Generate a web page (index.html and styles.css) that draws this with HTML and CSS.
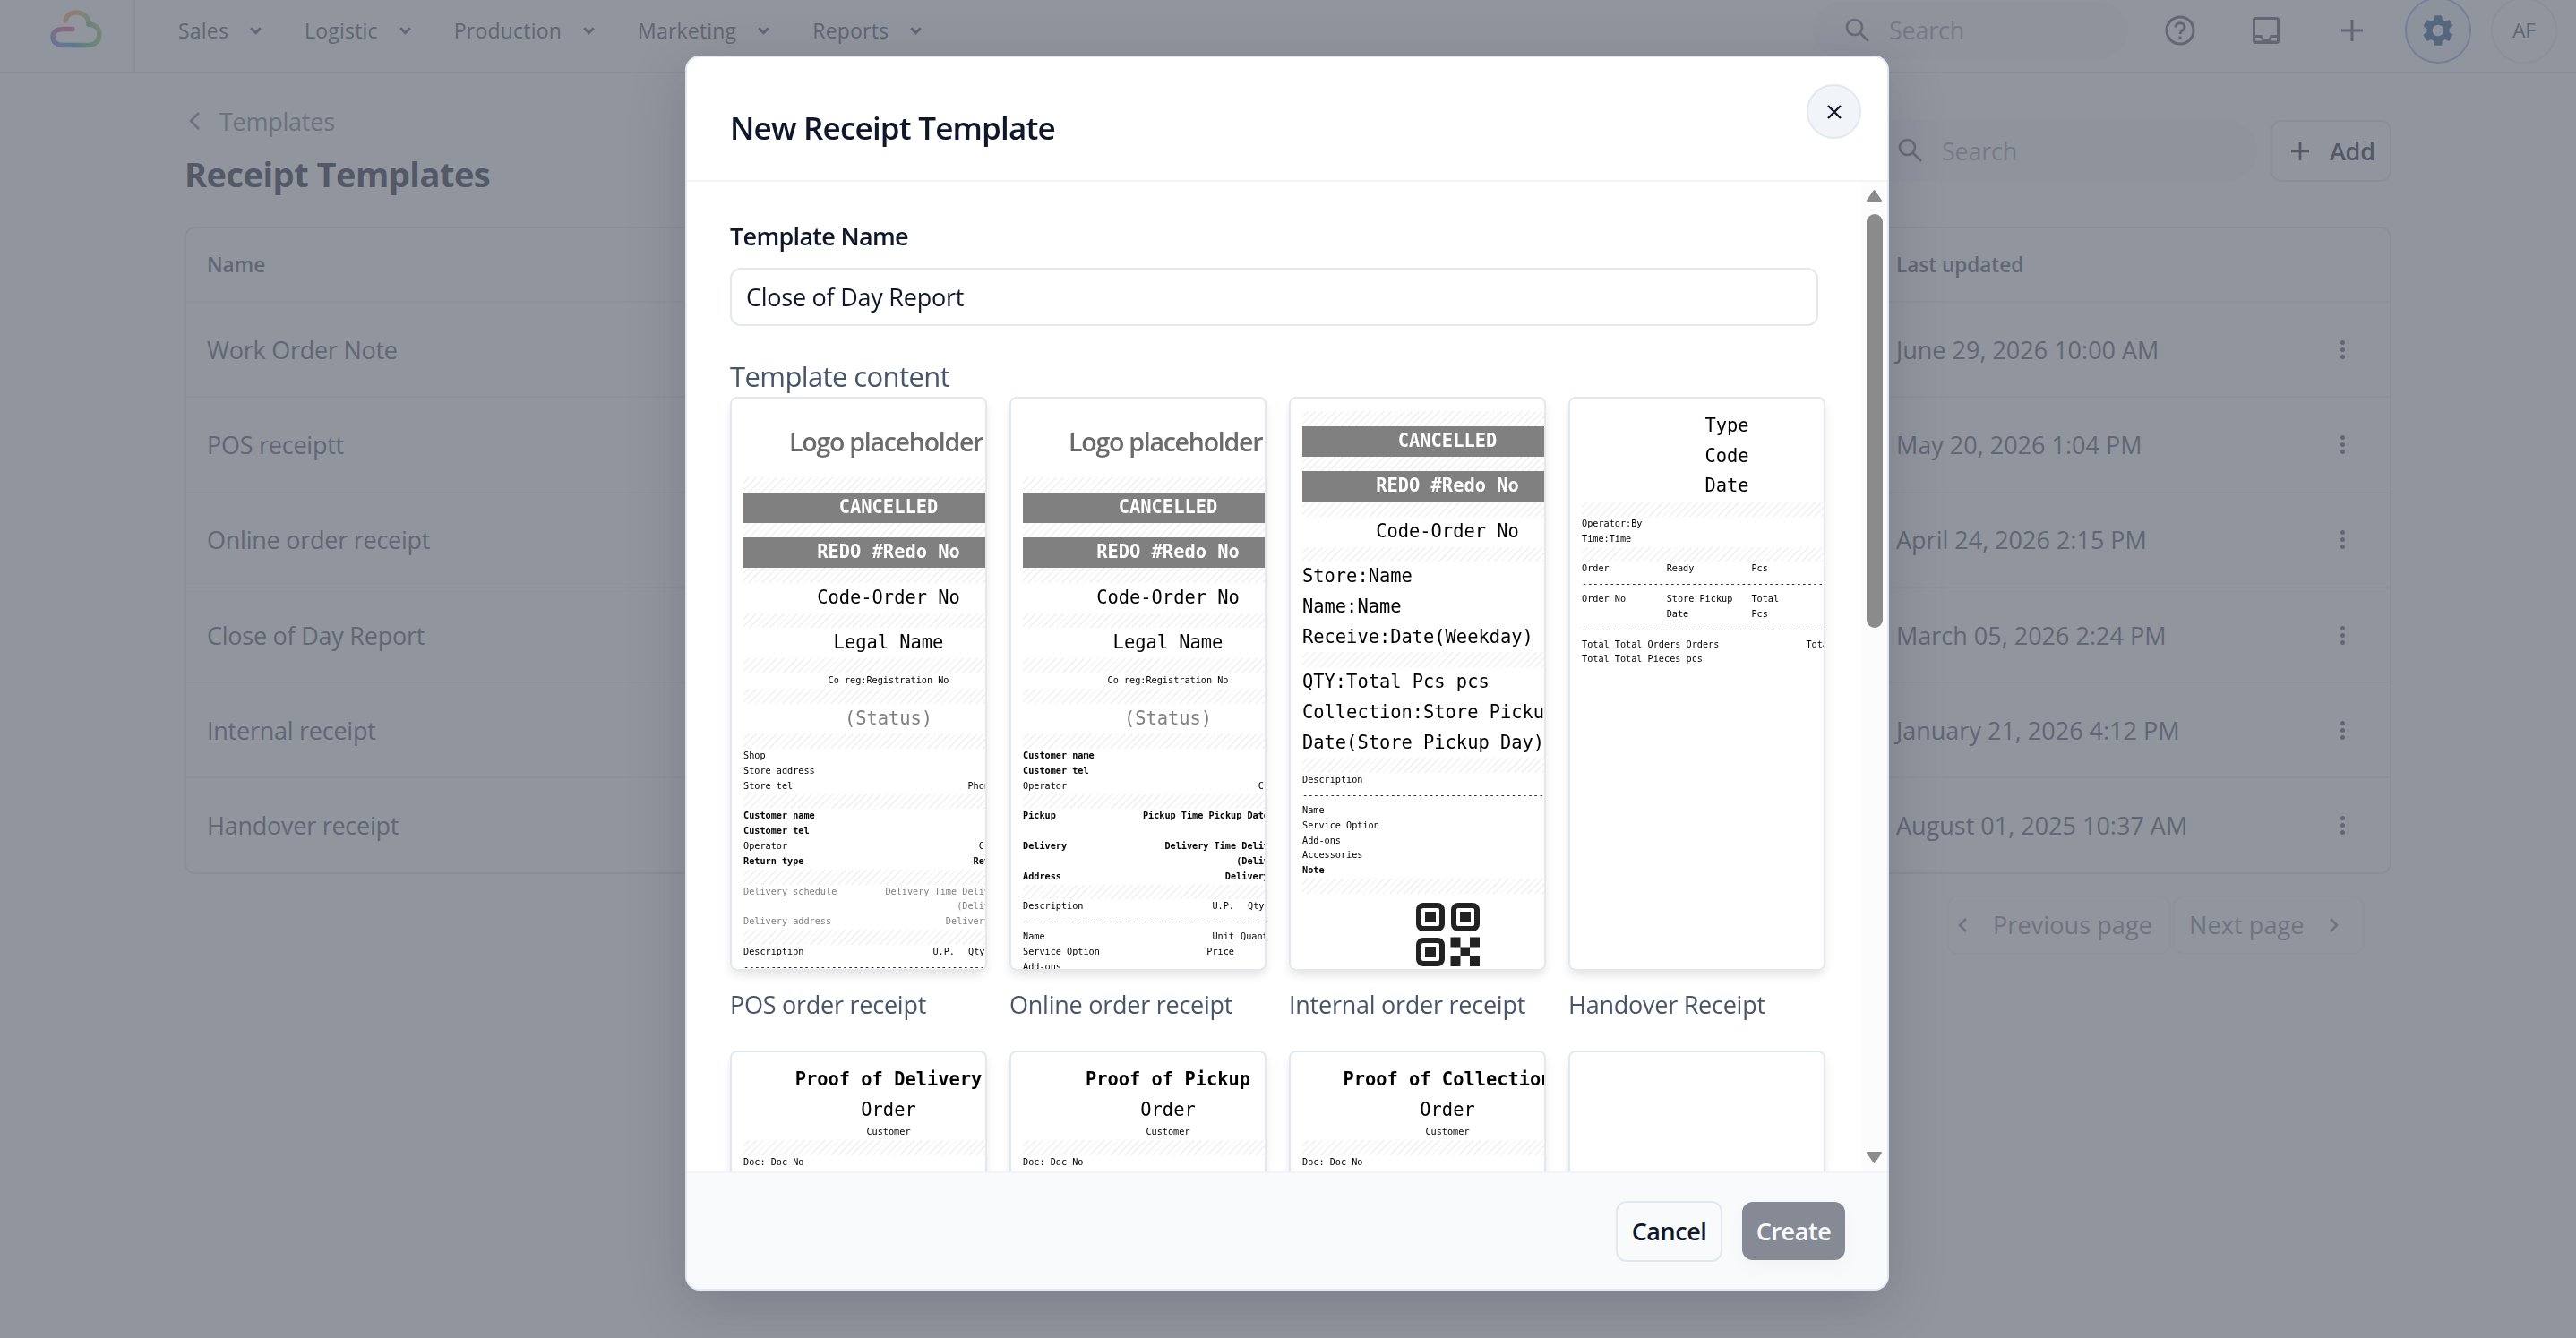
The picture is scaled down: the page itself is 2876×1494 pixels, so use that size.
FILE: index.html
```html
<!DOCTYPE html>
<html lang="en">
<head>
    <meta charset="utf-8" />
    <title>Receipt Templates</title>
    <link rel="stylesheet" href="styles.css">
</head>
<body>
    <header class="topbar">
        <div class="brand">
            <svg class="logo" viewBox="0 0 60 44" fill="none" stroke-width="5.5" stroke-linecap="round" stroke-linejoin="round">
                <defs>
                    <linearGradient id="g1" x1="0" y1="0" x2="1" y2="0.4">
                        <stop offset="0" stop-color="#ffb08c" /><stop offset="0.5" stop-color="#ecd08a" /><stop offset="1" stop-color="#b9d58c" />
                    </linearGradient>
                    <linearGradient id="g2" x1="0" y1="0" x2="1" y2="0">
                        <stop offset="0" stop-color="#8fa4ec" /><stop offset="0.4" stop-color="#6fb0d8" /><stop offset="0.7" stop-color="#7fcbb0" /><stop offset="1" stop-color="#b4d890" />
                    </linearGradient>
                    <linearGradient id="g3" x1="0" y1="1" x2="1" y2="0">
                        <stop offset="0" stop-color="#8fa4ec" /><stop offset="0.5" stop-color="#c893c8" /><stop offset="1" stop-color="#ee7f9c" />
                    </linearGradient>
                </defs>
                <path stroke="url(#g1)" d="M18 13C20 6 25 4 30 4c8 0 14 5 14 13" />
                <path stroke="url(#g2)" d="M44 17c7 0 12 5 12 11.500s-5 12-12 12H15c-4 0-7-1.500-9-4" />
                <path stroke="url(#g3)" d="M26 22.500H15c-7 0-11 4-11 9 0 2 1 4 2 5.500" />
            </svg>
        </div>
        <nav class="menu">
            <a>Sales <svg class="caret" viewBox="0 0 14 10"><path d="M2 2l5 5 5-5" /></svg></a>
            <a>Logistic <svg class="caret" viewBox="0 0 14 10"><path d="M2 2l5 5 5-5" /></svg></a>
            <a>Production <svg class="caret" viewBox="0 0 14 10"><path d="M2 2l5 5 5-5" /></svg></a>
            <a>Marketing <svg class="caret" viewBox="0 0 14 10"><path d="M2 2l5 5 5-5" /></svg></a>
            <a>Reports <svg class="caret" viewBox="0 0 14 10"><path d="M2 2l5 5 5-5" /></svg></a>
        </nav>
        <div class="tools">
            <div class="search">
                <svg class="icon-search" viewBox="0 0 28 28"><circle cx="10.500" cy="10.500" r="8.500" /><path d="M17 17l9 9" /></svg>
                <span>Search</span>
            </div>
            <div class="tool">
                <svg width="34" height="34" viewBox="0 0 34 34" fill="none" stroke="currentColor" stroke-width="3"><circle cx="17" cy="17" r="15" /><path d="M12 13.500c0-3 2.200-4.800 5-4.800s5 1.800 5 4.500c0 3.600-5 4-5 7.800" /><path d="M17 23.500v3" /></svg>
            </div>
            <div class="tool">
                <svg width="30" height="30" viewBox="0 0 30 30"><rect x="1.500" y="1.500" width="27" height="27" rx="2" fill="none" stroke="currentColor" stroke-width="3" /><path fill="currentColor" d="M2 20h8.500c.5 3 2 5 4.500 5s4-2 4.500-5H28v3h-6.500c-.6 1.400-1.300 2.600-2.500 3.500h9V29H2v-2.500h9c-1.200-.9-1.900-2.100-2.500-3.500H2z" /></svg>
            </div>
            <div class="tool">
                <svg width="24" height="24" viewBox="0 0 24 24" fill="none" stroke="currentColor" stroke-width="3"><path d="M12 0v24M0 12h24" /></svg>
            </div>
            <div class="tool tool-active">
                <svg width="42" height="42" viewBox="0 0 24 24" fill="currentColor"><path d="M19.140 12.940c.04-.3.060-.61.060-.94 0-.32-.02-.64-.07-.94l2.030-1.580c.18-.14.230-.41.120-.61l-1.920-3.320c-.12-.22-.37-.29-.59-.22l-2.390.96c-.5-.38-1.030-.7-1.620-.94l-.36-2.540c-.04-.24-.24-.41-.48-.41h-3.840c-.24 0-.43.170-.47.410l-.36 2.540c-.59.240-1.130.570-1.620.940l-2.390-.96c-.22-.08-.47 0-.59.220L2.740 8.870c-.12.210-.08.470.120.610l2.030 1.580c-.05.300-.09.630-.09.940s.02.640.07.940l-2.030 1.580c-.18.140-.23.410-.12.610l1.920 3.320c.12.220.370.290.590.220l2.390-.96c.5.380 1.030.700 1.620.940l.36 2.540c.05.240.240.410.480.410h3.840c.24 0 .44-.17.470-.41l.36-2.540c.59-.24 1.130-.56 1.620-.94l2.390.96c.22.080.470 0 .590-.22l1.920-3.320c.12-.22.070-.47-.12-.61l-2.010-1.580zM12 15.600c-1.980 0-3.600-1.620-3.600-3.600s1.620-3.600 3.600-3.600 3.600 1.620 3.600 3.600-1.620 3.600-3.600 3.600z" /></svg>
            </div>
            <div class="tool avatar">AF</div>
        </div>
    </header>

    <main class="page">
        <div class="page-head">
            <div>
                <a class="back"><svg width="14" height="22" viewBox="0 0 14 22"><path d="M12 2l-9 9 9 9" /></svg>Templates</a>
                <h1>Receipt Templates</h1>
            </div>
            <div class="page-actions">
                <div class="search">
                    <svg class="icon-search" viewBox="0 0 28 28"><circle cx="10.500" cy="10.500" r="8.500" /><path d="M17 17l9 9" /></svg>
                    <span>Search</span>
                </div>
                <button class="btn-add"><svg width="20" height="20" viewBox="0 0 20 20"><path d="M10 0v20M0 10h20" /></svg>Add</button>
            </div>
        </div>

        <div class="table">
            <div class="tr th"><span>Name</span><span>Last updated</span></div>
            <div class="tr"><span>Work Order Note</span><span class="date">June 29, 2026 10:00 AM</span><i class="dots"></i></div>
            <div class="tr"><span>POS receiptt</span><span class="date">May 20, 2026 1:04 PM</span><i class="dots"></i></div>
            <div class="tr"><span>Online order receipt</span><span class="date">April 24, 2026 2:15 PM</span><i class="dots"></i></div>
            <div class="tr"><span>Close of Day Report</span><span class="date">March 05, 2026 2:24 PM</span><i class="dots"></i></div>
            <div class="tr"><span>Internal receipt</span><span class="date">January 21, 2026 4:12 PM</span><i class="dots"></i></div>
            <div class="tr"><span>Handover receipt</span><span class="date">August 01, 2025 10:37 AM</span><i class="dots"></i></div>
        </div>

        <div class="pager">
            <a class="prev"><svg width="12" height="18" viewBox="0 0 12 18"><path d="M10 2L3 9l7 7" /></svg>Previous page</a>
            <a class="next">Next page<svg width="12" height="18" viewBox="0 0 12 18"><path d="M2 2l7 7-7 7" /></svg></a>
        </div>
    </main>

    <div class="backdrop">
        <div class="modal">
            <div class="modal-head">
                <h2>New Receipt Template</h2>
                <button class="close"><svg width="18" height="18" viewBox="0 0 18 18"><path d="M2 2l14 14M16 2L2 16" /></svg></button>
            </div>
            <div class="modal-body">
                <div class="form">
                    <label class="label" for="name">Template Name</label>
                    <input class="input" id="name" value="Close of Day Report" />
                    <p class="section">Template content</p>
                    <div class="cards">
                        <div class="item">
                            <div class="card">
                                <div class="receipt">
                                    <div class="logo-text">Logo placeholder</div>
                                    <div class="gap"></div>
                                    <div class="big bar">CANCELLED</div>
                                    <div class="gap"></div>
                                    <div class="big bar">REDO #Redo No</div>
                                    <div class="gap"></div>
                                    <div class="big center">Code-Order No</div>
                                    <div class="gap"></div>
                                    <div class="big center">Legal Name</div>
                                    <div class="gap"></div>
                                    <div class="center">Co reg:Registration No</div>
                                    <div class="gap"></div>
                                    <div class="big center grey">(Status)</div>
                                    <div class="gap"></div>
                                    <div>Shop</div>
                                    <div>Store address</div>
                                    <div class="pair"><span>Store tel</span><span>Phone number</span></div>
                                    <div class="gap"></div>
                                    <div class="bold">Customer name</div>
                                    <div class="bold">Customer tel</div>
                                    <div class="pair"><span>Operator</span><span>Created By</span></div>
                                    <div class="pair bold"><span>Return type</span><span>Return type</span></div>
                                    <div class="gap"></div>
                                    <div class="pair grey"><span>Delivery schedule</span><span>Delivery Time Delivery Date<br>(Delivery Day)</span></div>
                                    <div class="pair grey"><span>Delivery address</span><span>Delivery Address</span></div>
                                    <div class="gap"></div>
                                    <div class="cols"><span>Description</span><span class="price">U.P.</span><span class="qty">Qty</span></div>
                                    <div class="dash">-----------------------------------------------------</div>
                                </div>
                            </div>
                            <p>POS order receipt</p>
                        </div>
                        <div class="item">
                            <div class="card">
                                <div class="receipt">
                                    <div class="logo-text">Logo placeholder</div>
                                    <div class="gap"></div>
                                    <div class="big bar">CANCELLED</div>
                                    <div class="gap"></div>
                                    <div class="big bar">REDO #Redo No</div>
                                    <div class="gap"></div>
                                    <div class="big center">Code-Order No</div>
                                    <div class="gap"></div>
                                    <div class="big center">Legal Name</div>
                                    <div class="gap"></div>
                                    <div class="center">Co reg:Registration No</div>
                                    <div class="gap"></div>
                                    <div class="big center grey">(Status)</div>
                                    <div class="gap"></div>
                                    <div class="bold">Customer name</div>
                                    <div class="bold">Customer tel</div>
                                    <div class="pair"><span>Operator</span><span>Created By</span></div>
                                    <div class="gap"></div>
                                    <div class="pair pickup bold"><span>Pickup</span><span>Pickup Time Pickup Date</span></div>
                                    <div class="pair bold"><span>Delivery</span><span>Delivery Time Delivery Date<br>(Delivery Day)</span></div>
                                    <div class="pair bold"><span>Address</span><span>Delivery Address</span></div>
                                    <div class="gap"></div>
                                    <div class="cols"><span>Description</span><span class="price">U.P.</span><span class="qty">Qty</span></div>
                                    <div class="dash">-----------------------------------------------------</div>
                                    <div class="cols"><span>Name<br>Service Option<br>Add-ons</span><span class="price">Unit<br>Price</span><span>Quantity</span></div>
                                </div>
                            </div>
                            <p>Online order receipt</p>
                        </div>
                        <div class="item">
                            <div class="card">
                                <div class="receipt">
                                    <div class="gap"></div>
                                    <div class="big bar">CANCELLED</div>
                                    <div class="gap"></div>
                                    <div class="big bar">REDO #Redo No</div>
                                    <div class="gap"></div>
                                    <div class="big center">Code-Order No</div>
                                    <div class="gap"></div>
                                    <div class="big">Store:Name</div>
                                    <div class="big">Name:Name</div>
                                    <div class="big">Receive:Date(Weekday)</div>
                                    <div class="gap"></div>
                                    <div class="big">QTY:Total Pcs pcs</div>
                                    <div class="big">Collection:Store Pickup</div>
                                    <div class="big">Date(Store Pickup Day)</div>
                                    <div class="gap"></div>
                                    <div>Description</div>
                                    <div class="dash">-----------------------------------------------------</div>
                                    <div>Name</div>
                                    <div>Service Option</div>
                                    <div>Add-ons</div>
                                    <div>Accessories</div>
                                    <div class="bold">Note</div>
                                    <div class="gap"></div>
                                    <svg class="qr" viewBox="0 0 71 71">
                                        <g fill="none" stroke="#222" stroke-width="6">
                                            <rect x="3" y="3" width="26" height="26" rx="5" />
                                            <rect x="42" y="3" width="26" height="26" rx="5" />
                                            <rect x="3" y="42" width="26" height="26" rx="5" />
                                        </g>
                                        <path fill="#222" d="M10 10h12v12H10zM49 10h12v12H49zM10 49h12v12H10zM38.500 38.500h11v11h-11zM60 38.500h11v11H60zM49.500 49.500H60V60H49.500zM38.500 60h11v11h-11zM60 60h11v11H60z" />
                                    </svg>
                                </div>
                            </div>
                            <p>Internal order receipt</p>
                        </div>
                        <div class="item">
                            <div class="card">
                                <div class="receipt">
                                    <div class="big center">Type</div>
                                    <div class="big center">Code</div>
                                    <div class="big center">Date</div>
                                    <div class="gap"></div>
                                    <div>Operator:By</div>
                                    <div>Time:Time</div>
                                    <div class="gap"></div>
                                    <div class="thirds"><span>Order</span><span>Ready</span><span>Pcs</span></div>
                                    <div class="dash">-----------------------------------------------------</div>
                                    <div class="thirds"><span>Order No</span><span>Store Pickup<br>Date</span><span>Total<br>Pcs</span></div>
                                    <div class="dash">-----------------------------------------------------</div>
                                    <div class="pair"><span>Total Total Orders Orders</span><span>Total Pieces</span></div>
                                    <div>Total Total Pieces pcs</div>
                                </div>
                            </div>
                            <p>Handover Receipt</p>
                        </div>
                        <div class="item">
                            <div class="card">
                                <div class="receipt">
                                    <div class="big center bold">Proof of Delivery</div>
                                    <div class="big center">Order</div>
                                    <div class="center">Customer</div>
                                    <div class="gap"></div>
                                    <div>Doc: Doc No</div>
                                    <div>Remark</div>
                                </div>
                            </div>
                        </div>
                        <div class="item">
                            <div class="card">
                                <div class="receipt">
                                    <div class="big center bold">Proof of Pickup</div>
                                    <div class="big center">Order</div>
                                    <div class="center">Customer</div>
                                    <div class="gap"></div>
                                    <div>Doc: Doc No</div>
                                    <div>Remark</div>
                                </div>
                            </div>
                        </div>
                        <div class="item">
                            <div class="card">
                                <div class="receipt">
                                    <div class="big center bold">Proof of Collection</div>
                                    <div class="big center">Order</div>
                                    <div class="center">Customer</div>
                                    <div class="gap"></div>
                                    <div>Doc: Doc No</div>
                                    <div>Remark</div>
                                </div>
                            </div>
                        </div>
                        <div class="item">
                            <div class="card"></div>
                        </div>
                    </div>
                </div>
                <div class="scrollbar">
                    <svg width="19" height="15" viewBox="0 0 19 15"><path d="M9.500 2L17 13H2z" /></svg>
                    <div class="thumb"></div>
                    <svg class="down" width="19" height="15" viewBox="0 0 19 15"><path d="M9.500 13L17 2H2z" /></svg>
                </div>
            </div>
            <div class="modal-foot">
                <button class="btn-cancel">Cancel</button>
                <button class="btn-create">Create</button>
            </div>
        </div>
    </div>
</body>
</html>
```

FILE: styles.css
```css
:root {
    --line: #f0f2f6;
    --text: #a7aab4;
    --border: #e2e8f0;
}
* {
    box-sizing: border-box;
}
body {
    margin: 0;
    height: 1494px;
    overflow: hidden;
    background: #fff;
    color: var(--text);
    font-family: "Segoe UI", "Open Sans", "Noto Sans", sans-serif;
    font-size: 27px;
    letter-spacing: -0.250px;
}
h1, h2, p {
    margin: 0;
}
button, input {
    font: inherit;
    letter-spacing: inherit;
}
svg {
    display: block;
    flex: none;
}
/* top bar */
.topbar {
    display: flex;
    height: 82px;
    border-bottom: 2px solid var(--line);
}
.brand {
    width: 151px;
    padding: 10px 0 0 55px;
    border-right: 2px solid var(--line);
}
.logo {
    width: 60px;
    height: 44px;
    opacity: .65;
}
.menu {
    display: flex;
    gap: 47px;
    padding-left: 48px;
    height: 68px;
    align-items: center;
    font-size: 23px;
    font-weight: 500;
    letter-spacing: 0.200px;
}
.menu a {
    display: flex;
    align-items: center;
    gap: 23px;
}
.caret {
    width: 15px;
    height: 11px;
}
.caret path, .back path, .pager path, .btn-add path, .icon-search {
    fill: none;
    stroke: currentColor;
    stroke-width: 2.700;
}
.tools {
    display: flex;
    align-items: center;
    gap: 22px;
    height: 67px;
    margin-left: auto;
    padding-right: 21px;
}
.search {
    display: flex;
    align-items: center;
    gap: 21px;
    width: 351px;
    height: 65px;
    padding-left: 36px;
    border-radius: 33px;
    background: #fcfcfd;
    color: #cccfd5;
}
.icon-search {
    width: 28px;
    height: 28px;
    color: #b0b3bc;
}
.tool {
    display: flex;
    align-items: center;
    justify-content: center;
    width: 74px;
    height: 74px;
    border-radius: 50%;
}
.tool-active {
    border: 2px solid #ccd6f5;
    background: #f8fbff;
    color: #93a8c8;
}
.avatar {
    border: 2px solid #f5f6f8;
    font-size: 22.500px;
    font-weight: 500;
}
/* list page */
.page {
    width: 2464px;
    margin: 0 auto;
}
.page-head {
    display: flex;
    justify-content: space-between;
    height: 171px;
}
.back {
    display: flex;
    align-items: center;
    gap: 21px;
    margin-top: 32px;
    padding-left: 4px;
    height: 42px;
    color: #bcbfc8;
}
h1 {
    margin-top: 11px;
    line-height: 54px;
    font-size: 38px;
    letter-spacing: -0.500px;
    color: #8d919b;
}
.page-actions {
    display: flex;
    gap: 16px;
    padding-top: 52px;
}
.page-actions .search {
    width: 438px;
    height: 68px;
    padding-left: 38px;
}
.btn-add {
    display: flex;
    align-items: center;
    gap: 23px;
    width: 135px;
    height: 69px;
    padding: 0 21px;
    border: 2px solid var(--line);
    border-radius: 12px;
    background: none;
    color: #8d919b;
    font-weight: 600;
}
.table {
    border: 2px solid var(--line);
    border-radius: 12px;
}
.tr {
    display: flex;
    align-items: center;
    height: 106.300px;
    padding: 0 50px 0 23px;
    border-top: 2px solid #f7f8fa;
}
.tr span:first-child {
    width: 1886px;
}
.date {
    letter-spacing: 0;
}
.th {
    height: 81px;
    border: none;
    font-size: 22.500px;
    font-weight: 600;
    letter-spacing: 0;
}
.dots {
    width: 5px;
    height: 5px;
    margin-left: auto;
    border-radius: 50%;
    background: currentColor;
    box-shadow: 0 -8px currentColor, 0 8px currentColor;
}
.pager {
    display: flex;
    justify-content: flex-end;
    gap: 2px;
    margin-top: 24px;
    padding-right: 30px;
    color: #c0c3ca;
    letter-spacing: 0.100px;
}
.pager a {
    display: flex;
    align-items: center;
    justify-content: space-between;
    height: 66px;
    border: 2px solid #fafafc;
    border-radius: 12px;
}
.pager .prev {
    width: 250px;
    padding: 0 19px 0 9px;
}
.pager .next {
    width: 214px;
    padding: 0 26px 0 16px;
}
/* dialog */
.backdrop {
    position: fixed;
    inset: 0;
    display: flex;
    justify-content: center;
    align-items: flex-start;
    padding: 62px 2px 0 0;
    background: rgba(15, 23, 42, .46);
}
.modal {
    display: flex;
    flex-direction: column;
    width: 1344px;
    height: 1379px;
    border: 2px solid var(--border);
    border-radius: 16px;
    background: #fff;
    color: #475569;
    box-shadow: 0 16px 64px rgba(15, 23, 42, .18);
    overflow: hidden;
}
.modal-head {
    display: flex;
    justify-content: space-between;
    height: 139px;
    flex: none;
    padding: 30px 29px 0 48px;
    border-bottom: 2px solid #f1f5f9;
}
h2 {
    line-height: 97px;
    font-size: 35px;
    font-weight: 600;
    letter-spacing: -0.800px;
    color: #0f172a;
}
.close {
    display: flex;
    align-items: center;
    justify-content: center;
    width: 61px;
    height: 61px;
    border: 2px solid var(--border);
    border-radius: 50%;
    background: #f1f5f9;
}
.close path {
    stroke: #0f172a;
    stroke-width: 2.400;
}
.modal-body {
    display: flex;
    flex: 1;
    min-height: 0;
}
.form {
    flex: 1;
    padding: 41px 34px 0 48px;
    overflow: hidden;
}
.label {
    display: block;
    line-height: 40px;
    font-weight: 600;
    letter-spacing: -0.700px;
    color: #0f172a;
}
.input {
    display: block;
    width: 1215px;
    height: 65px;
    margin-top: 15px;
    padding: 0 16px;
    border: 2px solid var(--border);
    border-radius: 12px;
    color: #0f172a;
}
.section {
    margin-top: 33px;
    line-height: 46px;
    font-size: 31px;
    letter-spacing: -0.600px;
}
.cards {
    display: grid;
    grid-template-columns: repeat(4, 287px);
    gap: 24px 25px;
}
.item p {
    margin-top: 18px;
    line-height: 40px;
}
.item {
    height: 706px;
}
.card {
    height: 641px;
    padding: 14px 13px;
    border: 2px solid var(--border);
    border-radius: 8px;
    overflow: hidden;
    box-shadow: 0 6px 12px -2px rgba(0, 0, 0, .12);
}
/* receipt paper, wider than its card and cut off on the right */
.receipt {
    width: 324px;
    color: #000;
    font-family: Consolas, "DejaVu Sans Mono", monospace;
    font-size: 10.200px;
    line-height: 16.840px;
    letter-spacing: 0;
    white-space: nowrap;
}
.logo-text {
    height: 74px;
    padding-left: 51px;
    line-height: 68px;
    font-family: "Open Sans", sans-serif;
    font-size: 28.500px;
    font-weight: 600;
    letter-spacing: -1.250px;
    color: #6b6b6b;
}
.gap {
    height: 16.840px;
    background: repeating-linear-gradient(135deg, #fff 0 4.200px, #f0f0f0 4.200px 5.450px);
}
.big {
    font-size: 20.400px;
    line-height: 33.680px;
}
.center {
    text-align: center;
}
.bar {
    text-align: center;
    background: #808080;
    color: #fff;
    font-weight: bold;
}
.bold {
    font-weight: bold;
}
.grey {
    color: #808080;
}
.pair {
    display: flex;
    justify-content: space-between;
    text-align: right;
}
.pickup {
    height: 33.680px;
    padding-right: 49px;
}
.cols {
    display: grid;
    grid-template-columns: 186px 50px 1fr;
}
.cols .price {
    text-align: right;
}
.cols span:last-child {
    padding-left: 7px;
}
.cols .qty:last-child {
    padding-left: 15px;
}
.thirds {
    display: grid;
    grid-template-columns: 94.700px 94.700px 1fr;
}
.qr {
    width: 71px;
    height: 71px;
    margin: 10px auto;
}
.scrollbar {
    display: flex;
    flex-direction: column;
    align-items: center;
    width: 29px;
    padding: 8px 0;
    background: #fcfcfc;
}
.scrollbar path {
    fill: #8b8b8b;
    stroke: #8b8b8b;
    stroke-width: 2;
    stroke-linejoin: round;
}
.thumb {
    width: 18px;
    height: 462px;
    margin-top: 13px;
    border-radius: 9px;
    background: #8b8b8b;
}
.down {
    margin-top: auto;
}
.modal-foot {
    display: flex;
    justify-content: flex-end;
    align-items: center;
    gap: 22px;
    height: 131px;
    flex: none;
    padding-right: 47px;
    border-top: 2px solid #f1f5f9;
    background: #f8fafc;
}
.modal-foot button {
    padding: 0;
    border-radius: 12px;
    font-weight: 600;
    letter-spacing: -0.450px;
}
.modal-foot .btn-cancel {
    width: 119px;
    height: 68px;
    border: 2px solid var(--border);
    background: #f9fafc;
    color: #0f172a;
}
.modal-foot .btn-create {
    width: 115px;
    height: 65px;
    border: none;
    background: #858a94;
    color: #f8fafc;
    box-shadow: 0 8px 24px rgba(15, 23, 42, .03);
}
```
